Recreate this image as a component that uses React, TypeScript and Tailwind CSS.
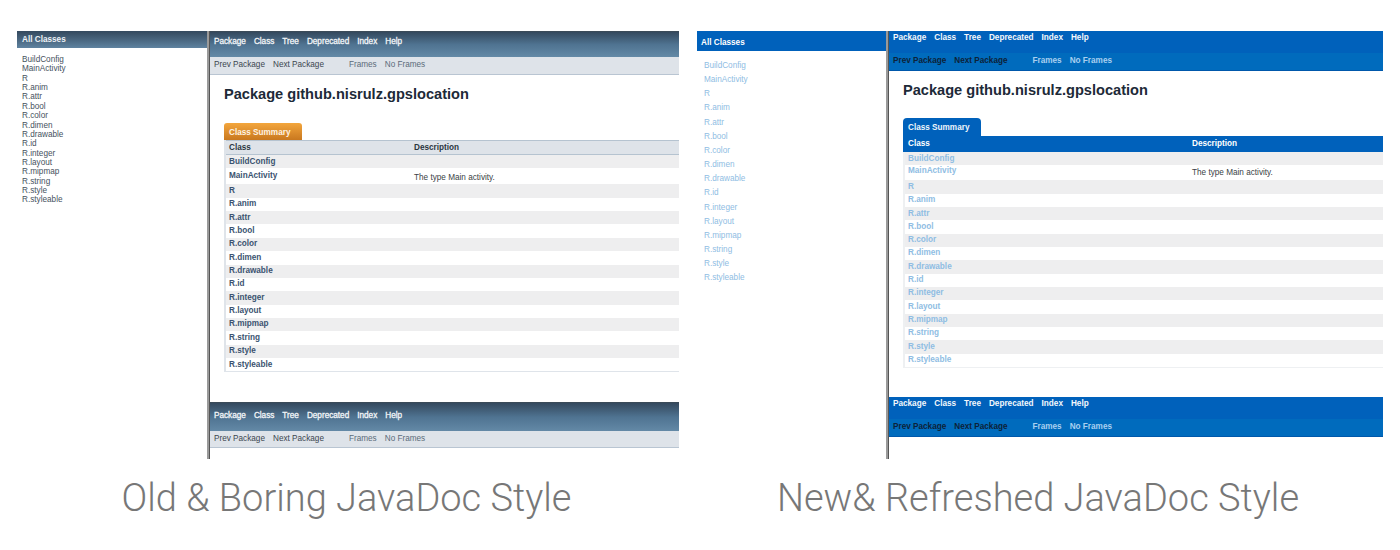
const classes = ["BuildConfig", "MainActivity", "R", "R.anim", "R.attr", "R.bool", "R.color", "R.dimen", "R.drawable", "R.id", "R.integer", "R.layout", "R.mipmap", "R.string", "R.style", "R.styleable"];
const navItems = ["Package", "Class", "Tree", "Deprecated", "Index", "Help"];

function OldNav({ bottom = false }: { bottom?: boolean }) {
  return (
    <div>
      <div className={(bottom ? "h-[29px] pt-[7px]" : "h-[26px] pt-1") + " pl-1 flex gap-2 text-[8.2px] leading-[11px] [-webkit-text-stroke:0.3px] text-[#f2f5f8] bg-gradient-to-b from-[#34495e] via-[#4f7391] to-[#6389a6] border-t border-[#3a4a58]"}>
        {navItems.map((n) => <span key={n}>{n}</span>)}
      </div>
      <div className={(bottom ? "h-[17px]" : "h-[18px]") + " pl-1 flex items-start pt-[2px] leading-[11px] text-[8.2px] text-[#3c4650] bg-[#dee3e9] border-b border-[#b9c5d2]"}>
        <span>Prev Package</span>
        <span className="ml-2">Next Package</span>
        <span className="ml-[25px] text-[#5b6b7a]">Frames</span>
        <span className="ml-2 text-[#5b6b7a]">No Frames</span>
      </div>
    </div>
  );
}

function NewNav() {
  return (
    <div className="bg-[#0061bb] border-b border-[#0058ab]">
      <div className="h-[22px] pt-[1px] pl-1 flex gap-2 text-[8.2px] leading-[11px] font-bold text-[#f4f8fc]">
        {navItems.map((n) => <span key={n}>{n}</span>)}
      </div>
      <div className="h-[17px] pl-1 flex items-start pt-[2px] leading-[11px] text-[8.2px] font-bold text-[#0d2238] bg-[#006bbd]">
        <span>Prev Package</span>
        <span className="ml-2">Next Package</span>
        <span className="ml-[25px] text-[#a9d0f0]">Frames</span>
        <span className="ml-2 text-[#a9d0f0]">No Frames</span>
      </div>
    </div>
  );
}

function OldTable() {
  return (
    <div className="ml-[14px] mt-[21px] text-[8.2px]">
      <div className="w-[78px] h-[17px] pl-[5px] pt-[3px] flex items-center rounded-t-[3px] font-bold text-[#fdf3e4] bg-gradient-to-b from-[#f3a63c] to-[#c9781f]">Class Summary</div>
      <div className="border-l-2 border-b border-[#dfe4ea]">
        <div className="h-[15px] pl-[3px] pt-px flex items-center font-bold text-[#2b3640] bg-[#dee3e9] border-y border-[#b5c3d0]">
          <span className="w-[185px]">Class</span>
          <span>Description</span>
        </div>
        {classes.map((c, i) => (
          <div key={c} className={(i === 1 ? "h-[16px] items-start pt-[2px] " : "h-[13.37px] items-center ") + "pl-[3px] flex font-bold text-[#3b5370] " + (i % 2 === 0 ? "bg-[#eeeeef]" : "bg-white")}>
            <span className="w-[185px]">{c}</span>
            {i === 1 && <span className="font-normal text-[#3a3f45] mt-[2px]">The type Main activity.</span>}
          </div>
        ))}
      </div>
    </div>
  );
}

function NewTable() {
  return (
    <div className="ml-[14px] mt-5 text-[8.2px]">
      <div className="w-[78px] h-[18px] pl-[5px] pt-[3px] flex items-center rounded-t-[4px] font-bold text-[#eef5fb] bg-[#0061bb]">Class Summary</div>
      <div className="h-[16px] pl-[5px] flex items-center font-bold text-white bg-[#0061bb]">
        <span className="w-[284px]">Class</span>
        <span>Description</span>
      </div>
      <div className="border-l-2 border-b border-[#eef0f2]">
        {classes.map((c, i) => (
          <div key={c} className={(i === 1 ? "h-[15px] items-start " : "h-[13.33px] items-center ") + "pl-[3px] flex font-bold text-[#8fbde3] " + (i % 2 === 0 ? "bg-[#eeeeef]" : "bg-white")}>
            <span className="w-[284px]">{c}</span>
            {i === 1 && <span className="font-normal text-[#3a3f45] mt-[2px]">The type Main activity.</span>}
          </div>
        ))}
      </div>
    </div>
  );
}

function Shot({ old }: { old: boolean }) {
  return (
    <div className={(old ? "w-[662px]" : "w-[686px]") + " h-[428px] flex overflow-hidden bg-white"}>
      <div className={old ? "w-[190px] shrink-0" : "w-[189px] shrink-0"}>
        {old ? (
          <div className="h-[17px] pl-[5px] pt-[2px] flex items-center text-[8.2px] font-bold text-[#eef2f6] bg-gradient-to-b from-[#34495e] to-[#5f83a0]">All Classes</div>
        ) : (
          <div className="h-[20px] pl-1 flex items-center pt-[4px] text-[8.2px] font-bold text-white bg-[#0061bb]">All Classes</div>
        )}
        {old ? (
          <ul className="mt-[7px] pl-[5px] text-[8.2px] leading-[9.36px] text-[#46525e]">
            {classes.map((c) => <li key={c}>{c}</li>)}
          </ul>
        ) : (
          <ul className="mt-2 pl-[7px] text-[8.2px] leading-[14.15px] text-[#8fbde3]">
            {classes.map((c) => <li key={c}>{c}</li>)}
          </ul>
        )}
      </div>
      <div className="w-[3px] shrink-0 bg-[#9a9a9a] border-r border-[#555]" />
      <div className="flex-1 min-w-0">
        {old ? <OldNav /> : <NewNav />}
        <h1 className="ml-[14px] mt-[11px] text-[14.6px] leading-4 font-bold text-[#1d2a38]">Package github.nisrulz.gpslocation</h1>
        {old ? <OldTable /> : <NewTable />}
        <div className={old ? "mt-[30px]" : "mt-[29px]"}>
          {old ? <OldNav bottom /> : <NewNav />}
        </div>
      </div>
    </div>
  );
}

export default function App() {
  return (
    <div className="w-[1400px] h-[550px] bg-white overflow-hidden pt-[31px] pl-[17px] font-['Liberation_Sans',sans-serif]">
      <div className="flex gap-[18px]">
        <Shot old />
        <Shot old={false} />
      </div>
      <div className="flex font-['Roboto',sans-serif] font-light text-[38px] leading-[44px] text-[#777777] mt-[17px]">
        <p className="w-[659px] text-center whitespace-nowrap">Old &amp; Boring JavaDoc Style</p>
        <p className="ml-[21px] w-[682px] text-center whitespace-nowrap">New&amp; Refreshed JavaDoc Style</p>
      </div>
    </div>
  );
}
